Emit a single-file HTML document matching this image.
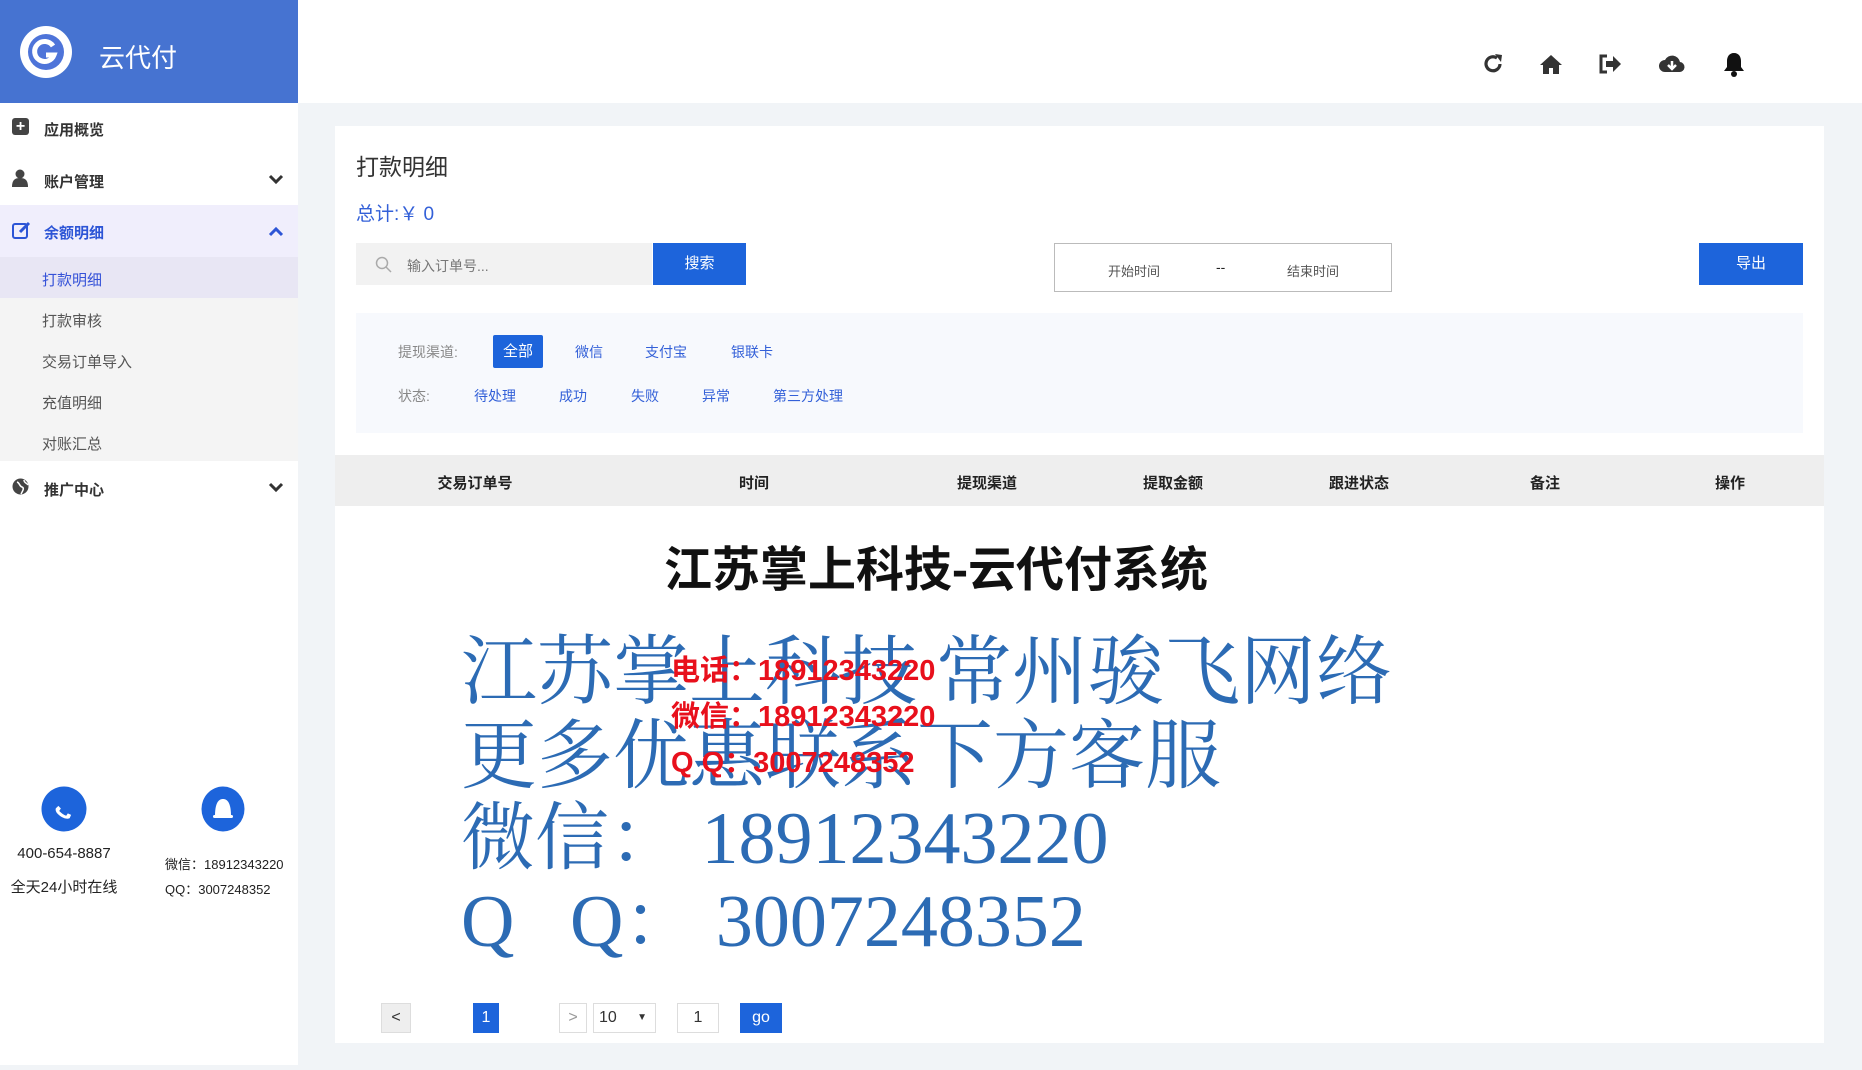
<!DOCTYPE html>
<html><head><meta charset="utf-8"><style>
*{margin:0;padding:0;box-sizing:border-box}
body{width:1862px;height:1070px;overflow:hidden;background:#f1f4f7;font-family:"Liberation Sans","Noto Sans CJK SC",sans-serif;position:relative;color:#333}
.a{position:absolute;white-space:nowrap}
.side{position:absolute;left:0;top:0;width:298px;height:1065px;background:#fff}
.hdr{position:absolute;left:0;top:0;width:298px;height:103px;background:#4673d1}
.top{position:absolute;left:298px;top:0;width:1564px;height:103px;background:#fff}
.mi{position:absolute;left:0;width:298px;font-size:15px;font-weight:bold;color:#333}
.sub{font-size:15px;color:#555;left:42px}
.card{position:absolute;left:335px;top:126px;width:1489px;height:917px;background:#fff}
.btn{position:absolute;background:#1d64db;color:#fff;font-size:15px;text-align:center}
.blue{color:#3360d8}
.th{top:472px;font-size:15px;font-weight:bold;color:#222;transform:translateX(-50%)}
.wm{font-family:"Liberation Serif","Noto Serif CJK SC",serif;color:#1b5fae;font-size:74px;left:461px;opacity:.92}
.red{color:#e8101c;font-size:29px;font-weight:bold;left:671px}
.pg{position:absolute;top:1003px;height:30px;border:1px solid #ddd;background:#fff;font-size:16px;text-align:center;line-height:28px}
</style></head><body>
<div class="side"></div>
<div class="hdr"></div>
<div class="top"></div>
<svg class="a" style="left:20px;top:26px" width="52" height="52"><circle cx="26" cy="26" r="26" fill="#fff"/><circle cx="26" cy="26" r="18" fill="#4e74d9"/><path d="M33 20a10 10 0 1 0 1 9h-8" stroke="#fff" stroke-width="5" fill="none"/></svg>
<div class="a" style="left:99px;top:38px;font-size:26px;color:#fff">云代付</div>

<div class="mi" style="top:111px;height:36px"><span class="a" style="left:12px;top:7px;width:17px;height:17px;background:#444;border-radius:3px;color:#fff;text-align:center;line-height:17px;font-size:16px">+</span><span class="a" style="left:44px;top:8px">应用概览</span></div>
<div class="mi" style="top:162px;height:36px"><svg class="a" style="left:12px;top:7px" width="16" height="18"><circle cx="8" cy="5" r="4.5" fill="#444"/><path d="M0 18c0-7 3-9 8-9s8 2 8 9z" fill="#444"/></svg><span class="a" style="left:44px;top:9px">账户管理</span><svg class="a" style="left:268px;top:12px" width="16" height="12"><path d="M2 2l6 6 6-6" stroke="#333" stroke-width="3" fill="none"/></svg></div>
<div class="mi" style="top:205px;height:52px;background:#f0eefc;color:#2d55d6"><svg class="a" style="left:12px;top:16px" width="20" height="18"><rect x="1" y="3" width="14" height="14" rx="2" stroke="#2d55d6" stroke-width="2" fill="none"/><path d="M8 11l9-9" stroke="#2d55d6" stroke-width="3"/></svg><span class="a" style="left:44px;top:17px">余额明细</span><svg class="a" style="left:268px;top:20px" width="16" height="12"><path d="M2 10l6-6 6 6" stroke="#2d55d6" stroke-width="3" fill="none"/></svg></div>
<div class="a" style="left:0;top:257px;width:298px;height:204px;background:#f4f4f4"></div>
<div class="a" style="left:0;top:257px;width:298px;height:41px;background:#e8e6f4"></div>
<div class="a sub" style="top:269px;color:#3552d8">打款明细</div>
<div class="a sub" style="top:310px">打款审核</div>
<div class="a sub" style="top:351px">交易订单导入</div>
<div class="a sub" style="top:392px">充值明细</div>
<div class="a sub" style="top:433px">对账汇总</div>
<div class="mi" style="top:470px;height:36px"><svg class="a" style="left:12px;top:8px" width="17" height="17"><circle cx="8.5" cy="8.5" r="8" fill="#444"/><path d="M5 4c3 1 2 4 5 5s0 5-1 7M12 2c0 3 3 3 4 5" stroke="#fff" stroke-width="1.5" fill="none"/></svg><span class="a" style="left:44px;top:9px">推广中心</span><svg class="a" style="left:268px;top:12px" width="16" height="12"><path d="M2 2l6 6 6-6" stroke="#333" stroke-width="3" fill="none"/></svg></div>

<svg class="a" style="left:41px;top:786px" width="46" height="46"><circle cx="23" cy="23" r="22.5" fill="#1d64db"/><path d="M17 28c3 4 8 6 10 5l2-3-3-2-2 2c-2-1-5-4-6-6l2-2-2-3-3 2c-1 2 0 5 2 7z" fill="#fff" transform="rotate(-10 23 23)"/></svg>
<svg class="a" style="left:201px;top:786px" width="44" height="46"><ellipse cx="22" cy="23" rx="21.5" ry="22.5" fill="#1d64db"/><path d="M14 30c0-12 3-17 8-17s8 5 8 17z" fill="#fff"/><rect x="12" y="29" width="20" height="3" rx="1.5" fill="#fff"/></svg>
<div class="a" style="left:64px;top:845px;transform:translateX(-50%);font-size:15px;color:#222">400-654-8887</div>
<div class="a" style="left:64px;top:876px;transform:translateX(-50%);font-size:15px;color:#222">全天24小时在线</div>
<div class="a" style="left:165px;top:854px;font-size:13px;color:#222">微信：18912343220</div>
<div class="a" style="left:165px;top:879px;font-size:13px;color:#222">QQ：3007248352</div>

<svg class="a" style="left:1482px;top:53px" width="22" height="22"><path d="M18 11a7 7 0 1 1-3-6" stroke="#333" stroke-width="3.2" fill="none"/><path d="M13 1l7 1-1 7z" fill="#333"/></svg>
<svg class="a" style="left:1539px;top:53px" width="24" height="22"><path d="M12 2L1 12h3v9h6v-6h4v6h6v-9h3z" fill="#333"/></svg>
<svg class="a" style="left:1598px;top:54px" width="24" height="20"><path d="M9 2H3v16h6" stroke="#333" stroke-width="3" fill="none"/><path d="M8 7h7V2l8 8-8 8v-5H8z" fill="#333"/></svg>
<svg class="a" style="left:1658px;top:53px" width="28" height="22"><path d="M7 19a6 6 0 0 1 0-12 8 8 0 0 1 15 2 5 5 0 0 1-1 10z" fill="#333"/><path d="M14 8v7M10 12l4 4 4-4" stroke="#fff" stroke-width="2.5" fill="none"/></svg>
<svg class="a" style="left:1722px;top:51px" width="24" height="26"><path d="M12 2c-5 0-7 4-7 8v6l-3 4h20l-3-4v-6c0-4-2-8-7-8z" fill="#111"/><circle cx="12" cy="23" r="3" fill="#111"/></svg>

<div class="card"></div>
<div class="a" style="left:356px;top:148px;font-size:23px;color:#333">打款明细</div>
<div class="a blue" style="left:356px;top:199px;font-size:19px">总计:￥ 0</div>
<div class="a" style="left:356px;top:243px;width:296px;height:42px;background:#f2f2f2"></div>
<svg class="a" style="left:375px;top:256px" width="18" height="18"><circle cx="7" cy="7" r="5.5" stroke="#aaa" stroke-width="1.5" fill="none"/><path d="M11 11l5 5" stroke="#aaa" stroke-width="1.5"/></svg>
<div class="a" style="left:407px;top:256px;font-size:14px;color:#777">输入订单号...</div>
<div class="btn" style="left:653px;top:243px;width:93px;height:42px;line-height:42px">搜索</div>
<div class="a" style="left:1054px;top:243px;width:338px;height:49px;border:1px solid #bbb"></div>
<div class="a" style="left:1108px;top:261px;font-size:13px;color:#555">开始时间</div>
<div class="a" style="left:1216px;top:259px;font-size:14px;color:#222">--</div>
<div class="a" style="left:1287px;top:261px;font-size:13px;color:#555">结束时间</div>
<div class="btn" style="left:1699px;top:243px;width:104px;height:42px;line-height:42px">导出</div>

<div class="a" style="left:356px;top:313px;width:1447px;height:120px;background:#f7f9fd"></div>
<div class="a" style="left:398px;top:342px;font-size:14px;color:#888">提现渠道:</div>
<div class="btn" style="left:493px;top:335px;width:50px;height:33px;line-height:33px;font-size:15px;border-radius:2px">全部</div>
<div class="a blue" style="left:575px;top:342px;font-size:14px">微信</div>
<div class="a blue" style="left:645px;top:342px;font-size:14px">支付宝</div>
<div class="a blue" style="left:731px;top:342px;font-size:14px">银联卡</div>
<div class="a" style="left:398px;top:386px;font-size:14px;color:#888">状态:</div>
<div class="a blue" style="left:474px;top:386px;font-size:14px">待处理</div>
<div class="a blue" style="left:559px;top:386px;font-size:14px">成功</div>
<div class="a blue" style="left:631px;top:386px;font-size:14px">失败</div>
<div class="a blue" style="left:702px;top:386px;font-size:14px">异常</div>
<div class="a blue" style="left:773px;top:386px;font-size:14px">第三方处理</div>

<div class="a" style="left:335px;top:455px;width:1489px;height:51px;background:#eeeeee"></div>
<div class="a th" style="left:475px">交易订单号</div>
<div class="a th" style="left:754px">时间</div>
<div class="a th" style="left:987px">提现渠道</div>
<div class="a th" style="left:1173px">提取金额</div>
<div class="a th" style="left:1359px">跟进状态</div>
<div class="a th" style="left:1545px">备注</div>
<div class="a th" style="left:1730px">操作</div>

<div class="a" style="left:936px;top:530px;transform:translateX(-50%);font-size:48px;font-weight:bold;color:#111">江苏掌上科技-云代付系统</div>
<div class="a wm" style="top:611px;font-size:76px">江苏掌上科技 常州骏飞网络</div>
<div class="a wm" style="top:695px;font-size:76px">更多优惠联系下方客服</div>
<div class="a wm" style="top:779px">微信：&nbsp;18912343220</div>
<div class="a wm" style="top:862px">Q&nbsp;&nbsp;&nbsp;Q：&nbsp;3007248352</div>
<div class="a red" style="top:647px">电话：18912343220</div>
<div class="a red" style="top:693px">微信：18912343220</div>
<div class="a red" style="top:739px">Q Q：3007248352</div>

<div class="pg" style="left:381px;width:30px;background:#eee">&lt;</div>
<div class="pg" style="left:473px;width:26px;background:#1d64db;color:#fff;border-color:#1d64db">1</div>
<div class="pg" style="left:559px;width:28px;color:#999">&gt;</div>
<div class="pg" style="left:593px;width:63px;text-align:left;padding-left:5px">10<span style="position:absolute;right:8px;font-size:10px">▼</span></div>
<div class="pg" style="left:677px;width:42px">1</div>
<div class="pg" style="left:740px;width:42px;background:#1d64db;color:#fff;border-color:#1d64db">go</div>
</body></html>
